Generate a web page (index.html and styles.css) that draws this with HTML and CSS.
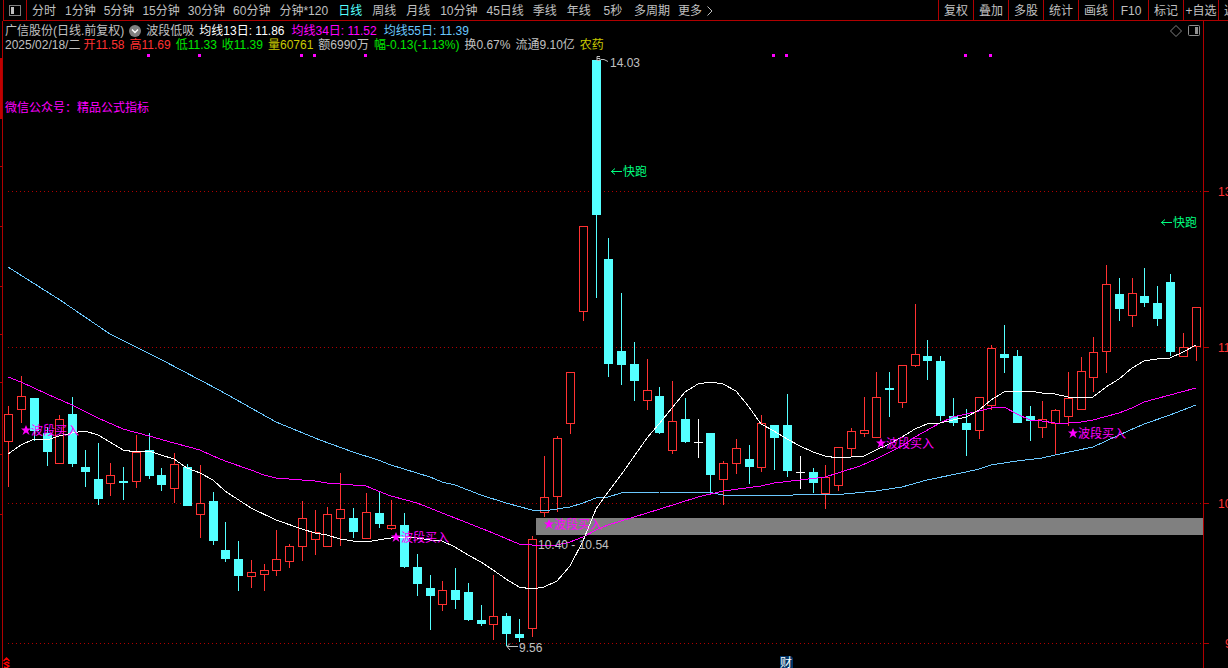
FILE: index.html
```html
<!DOCTYPE html>
<html lang="zh-CN">
<head>
<meta charset="utf-8">
<title>广信股份 日线</title>
<link rel="stylesheet" href="styles.css">
</head>
<body>
<header class="toolbar">
  <button class="layout-toggle" type="button" aria-label="侧栏">
    <svg width="12" height="11" viewBox="0 0 12 11" shape-rendering="crispEdges"><rect x=".5" y=".5" width="11" height="10" rx="1" fill="none" stroke="#808080"/><rect x="2" y="2" width="3" height="7" fill="#c0c0c0"/></svg>
  </button>
  <nav class="periods">
    <button type="button">分时</button>
    <button type="button">1分钟</button>
    <button type="button">5分钟</button>
    <button type="button">15分钟</button>
    <button type="button">30分钟</button>
    <button type="button">60分钟</button>
    <button type="button" class="wide">分钟*120</button>
    <button type="button" class="active">日线</button>
    <button type="button">周线</button>
    <button type="button">月线</button>
    <button type="button" class="wide">10分钟</button>
    <button type="button">45日线</button>
    <button type="button">季线</button>
    <button type="button">年线</button>
    <button type="button">5秒</button>
    <button type="button">多周期</button>
    <button type="button" class="more">更多<svg width="6" height="10" viewBox="0 0 6 10"><path d="M.5.5 5 5 .5 9.500" fill="none" stroke="#c0c0c0"/></svg></button>
  </nav>
  <div class="tools">
    <button type="button">复权</button>
    <button type="button">叠加</button>
    <button type="button">多股</button>
    <button type="button">统计</button>
    <button type="button">画线</button>
    <button type="button">F10</button>
    <button type="button">标记</button>
    <button type="button">+自选</button>
    <button type="button">返回</button>
  </div>
</header>
<main>
  <section class="info">
    <div class="row row-title">
      <span>广信股份(日线.前复权)</span>
      <button class="icon" type="button" aria-label="选择指标"><svg width="12" height="12" viewBox="0 0 12 12"><circle cx="6" cy="6" r="6" fill="#808080"/><path d="M3 4.500 6 7.500 9 4.500" fill="none" stroke="#fff" stroke-width="1.400"/></svg></button>
      <span>波段低吸</span>
      <span class="average white">均线13日: 11.86</span>
      <span class="average magenta">均线34日: 11.52</span>
      <span class="average blue">均线55日: 11.39</span>
      <span class="corner">
        <button class="icon" type="button" aria-label="标记"><svg width="12" height="12" viewBox="0 0 12 12"><path d="M6 .5 11.500 6 6 11.500 .5 6Z" fill="none" stroke="#808080"/></svg></button>
        <button class="icon" type="button" aria-label="右侧面板"><svg width="12" height="12" viewBox="0 0 12 12"><rect x=".5" y=".5" width="11" height="10" rx="1" fill="none" stroke="#909090"/><rect x="7" y="2" width="3" height="7" fill="#909090"/></svg></button>
      </span>
    </div>
    <div class="row row-quote">
      <span class="date">2025/02/18/二</span>
      <span class="red">开11.58</span>
      <span class="red">高11.69</span>
      <span class="green">低11.33</span>
      <span class="green">收11.39</span>
      <span class="yellow">量60761</span>
      <span>额6990万</span>
      <span class="green">幅-0.13(-1.13%)</span>
      <span>换0.67%</span>
      <span>流通9.10亿</span>
      <span class="yellow">农药</span>
    </div>
  </section>
  <svg class="chart" viewBox="0 52 1228 616" role="img" aria-label="日K线图">
    <defs>
      <g id="buy">
        <path class="star" d="M0-5 1.500-1.500H5L2 1 3.500 5 0 2.500-3.500 5-2 1-5-1.500H-1.500Z"/>
        <text class="t magenta" x="5" y="5">波段买入</text>
      </g>
      <g id="run">
        <path class="run-arrow" d="M0 .5H11M4-2.500 .5.5 4 3.500"/>
        <text class="t run" x="12" y="5">快跑</text>
      </g>
    </defs>
    <g class="grid">
      <path d="M8 191.500H1203M8 347.500H1203M8 503.500H1203M8 643.500H1203"/>
    </g>
    <path class="axis" d="M2.500 52V668M1203.500 52V668M1204 191.500h5M1204 347.500h5M1204 503.500h5M1204 643.500h5M0 166.500h2M0 226.500h2M0 286.500h2M0 334.500h2M0 382.500h2M0 454.500h2M0 514.500h2"/>
    <path class="thumb" d="M0 58h2v61H0z"/>
    <path class="band" d="M536 518H1203V535H536z"/>
    <path class="dots" d="M147 54h3v3h-3zM198 54h3v3h-3zM300 54h3v3h-3zM313 54h3v3h-3zM364 54h3v3h-3zM772 54h3v3h-3zM785 54h3v3h-3zM964 54h3v3h-3zM989 54h3v3h-3z"/>
    <g id="candles" class="candles"></g>
    <polyline class="ma ma55" points="8,267 60,300 110,334 162,360 219,390 276,422 320,440 353,452 378,460 391,465 430,477 442,482 455,485 481,495 506,503 532,510 544,511 557,509 570,507 583,503 596,498 608,497 621,493 634,492 659,492 698,493 708,492 723,495 793,495 800,494 844,494 876,491 902,487 927,480 966,472 979,469 991,465 1017,461 1042,458 1055,455 1093,447 1119,435 1144,424 1170,415 1196,405"/>
    <polyline class="ma ma34" points="8,377 21,382 34,388 47,394 72,405 98,418 123,429 149,436 174,443 200,450 213,456 225,461 251,470 264,475 276,478 315,481 327,483 366,486 378,491 391,496 417,503 455,518 493,533 519,544 544,546 557,545 570,542 583,537 596,530 608,525 660,509 698,497 723,491 761,486 774,483 800,480 825,477 838,473 860,466 876,459 902,446 915,437 940,423 953,417 966,414 979,411 991,408 1004,407 1017,414 1030,420 1042,421 1055,423 1068,423 1081,422 1093,420 1119,413 1132,408 1144,402 1170,395 1196,388"/>
    <polyline class="ma ma13" points="8,454 21,445 34,439 47,440 59,436 72,433 85,431 98,435 110,442 123,450 136,452 149,451 161,455 174,459 187,468 200,473 213,480 225,491 251,508 276,520 302,529 315,533 327,535 340,539 353,541 366,542 378,540 391,538 404,537 417,538 430,540 442,541 455,547 468,555 481,562 493,570 506,579 519,587 532,589 544,587 557,581 570,566 583,541 596,509 608,492 621,475 647,438 659,424 672,408 685,392 698,384 710,382 723,384 736,391 749,407 761,424 774,431 787,439 800,446 813,452 825,456 838,458 851,457 864,456 876,450 889,444 902,437 915,429 927,424 940,423 953,420 966,417 979,410 991,400 1004,392 1030,391 1042,393 1055,394 1068,397 1081,398 1093,397 1106,387 1119,379 1132,368 1144,361 1157,359 1170,358 1183,352 1196,345"/>
    <text class="t magenta" x="5" y="112">微信公众号：精品公式指标</text>
    <use href="#buy" x="26" y="430"/>
    <use href="#buy" x="396" y="537"/>
    <use href="#buy" x="549" y="524"/>
    <use href="#buy" x="881" y="443"/>
    <use href="#buy" x="1073" y="433"/>
    <use href="#run" x="611" y="171"/>
    <use href="#run" x="1161" y="222"/>
    <path class="note" d="M600 56.500h-3v4h3v-2h-3M601 59.500h3l4 2M507 646.500H518M510 643.500 507 646.500 510 650"/>
    <text class="t" x="610" y="67">14.03</text>
    <text class="t" x="519" y="652">9.56</text>
    <text class="t" x="538" y="549">10.40 - 10.54</text>
    <text class="t red" x="1218" y="196">13</text>
    <text class="t red" x="1218" y="352">11</text>
    <text class="t red" x="1218" y="508">10</text>
    <text class="t red" x="1225" y="648">9</text>
    <path class="badge" d="M780 656h11l2 2v10h-13z"/>
    <text class="t white" x="780" y="667">财</text>
    <path class="marker" d="M3.500 661 6.500 658 9.500 661M9.500 663.500 7 662 4.500 663.500 9 666 6.500 668 4 667"/>
  </svg>
</main>
<script src="chart.js"></script>
</body>
</html>
```
FILE: styles.css
```css
* { box-sizing: border-box; }

body {
  margin: 0;
  min-height: 100vh;
  overflow: hidden;
  background: #000;
  color: #c0c0c0;
  font: 12px/14px "Liberation Sans", "Noto Sans CJK SC", sans-serif;
}

button {
  margin: 0;
  padding: 0;
  border: 0;
  background: none;
  color: inherit;
  font: inherit;
  white-space: nowrap;
}

.toolbar {
  display: flex;
  height: 21px;
  margin-left: 3px;
  border-left: 1px solid #b00000;
  border-bottom: 1px solid #b00000;
}

.layout-toggle {
  display: grid;
  place-items: center;
  flex: none;
  width: 23px;
  border-right: 1px solid #b00000;
}

.periods {
  display: flex;
  flex: 1;
  min-width: 0;
  overflow: hidden;
}

.periods button {
  flex: none;
  min-width: 34px;
  padding: 1px 4px 0;
}

.periods .wide { padding: 1px 5px 0; }
.periods .active { color: #54ffff; }

.periods .more {
  display: flex;
  align-items: center;
  gap: 5px;
}

.tools {
  display: flex;
  flex: 0 0 290px;
  overflow: hidden;
}

.tools button {
  flex: 0 0 35px;
  padding-top: 1px;
  border-left: 1px solid #b00000;
}

.info {
  height: 31px;
  margin: 0 24px 0 2px;
  padding: 3px 3px 0 2px;
  border: solid #b00000;
  border-width: 0 1px;
}

.row {
  display: flex;
  align-items: center;
  height: 14px;
  gap: 5px;
  white-space: nowrap;
}

.average { margin-right: 2px; }
.date { margin-right: -2px; }

.icon { display: block; }
.icon svg { display: block; }

.corner {
  display: flex;
  gap: 6px;
  margin-left: auto;
}

.white { color: #fff; fill: #fff; }
.magenta { color: #f0f; fill: #f0f; }
.blue { color: #6ac8ff; }
.red { color: #ff3232; fill: #ff3232; }
.green { color: #00e600; }
.yellow { color: #c8c800; }

.chart {
  display: block;
  width: 100%;
  height: auto;
}

.t { font-size: 12px; white-space: pre; }
.t:not([class*=" "]) { fill: #c0c0c0; }
.run { fill: #00ff80; }

.grid path {
  stroke: #b00000;
  stroke-dasharray: 1 3;
  shape-rendering: crispEdges;
}

.axis { fill: none; stroke: #b00000; shape-rendering: crispEdges; }
.thumb { fill: #c00000; }
.band { fill: #808080; }
.dots, .star { fill: #f0f; }
.badge { fill: #003366; }
.marker { fill: none; stroke: #f00; stroke-width: 1.5; }
.note { fill: none; stroke: #c0c0c0; }
.run-arrow { fill: none; stroke: #00ff80; }

.candles { shape-rendering: crispEdges; }
.up { fill: none; stroke: #ff3232; }
.down { fill: #54ffff; }
.flat { fill: #fff; }

.ma { fill: none; shape-rendering: crispEdges; }
.ma13 { stroke: #fff; }
.ma34 { stroke: #f0f; }
.ma55 { stroke: #6ac8ff; }
```
FILE: chart.js
```js
// Each candle: centre x, kind (u = up, d = down, f = flat), high, body top, body bottom, low
const candles = `
8u406,414,442,487 21u376,396,410,423 34d398,398,431,441 47d427,433,452,466 59u415,419,464,464
72d397,414,464,467 85d450,467,472,487 98d443,479,499,505 110u463,475,484,496 123d467,481,483,500
136u435,452,482,488 149d433,450,476,479 161d468,475,485,491 174u453,464,489,503 187d464,467,506,506
200u465,503,515,538 213d492,501,541,545 225d522,550,559,562 238d541,559,576,591 251u560,572,577,588
264u564,570,575,591 276u530,559,571,576 289u544,546,562,568 302u501,518,547,561 315u510,532,540,555
327u507,514,547,547 340u473,509,519,546 353d508,518,532,538 366u493,512,539,539 379d492,513,524,528
391u500,525,529,530 404d513,525,567,568 417d554,567,584,596 430d575,588,596,630 442u581,590,605,611
455d568,590,600,609 468d583,592,620,621 481d605,620,624,626 493u575,616,625,640 506d613,616,634,646
519d619,634,638,642 532u536,539,629,637 544u456,497,513,517 557u436,438,497,512 570u372,372,424,434
583u226,226,312,321 596d60,60,215,298 608d238,259,364,377 621d293,351,365,385 634d342,364,381,401
647u359,390,401,410 659d387,396,433,434 672u381,421,451,454 685d398,419,442,443 698f419,442,443,458
710d433,433,475,492 723u461,463,480,505 736u439,448,464,474 749d445,459,467,484 761u415,423,468,472
774d425,425,438,470 787d394,425,471,477 800f456,472,473,489 813d468,472,483,493 825u465,477,494,509
838u447,447,486,491 851u428,431,449,457 864u397,430,434,437 876u372,397,438,438 889d372,388,390,417
902u365,365,403,408 915u304,354,366,367 927d340,356,361,380 940d356,361,416,421 953d398,416,423,426
966d409,423,430,456 979u397,397,431,439 991u345,348,406,410 1004d325,354,358,373 1017d350,356,423,423
1030d406,416,421,441 1042u401,419,428,438 1055u409,410,424,455 1068u372,398,417,426 1081u357,371,410,410
1093u337,352,378,392 1106u265,284,352,373 1119d278,294,309,321 1132u278,293,316,327 1144d268,296,303,307
1157d286,303,319,326 1170d274,282,352,356 1183u333,347,357,357 1196u307,307,347,361`;

const paths = { u: "", d: "", f: "" };
for (const item of candles.trim().split(/\s+/)) {
  const [, xs, kind, rest] = item.match(/^(\d+)([udf])(.+)$/);
  const x = Number(xs);
  const [high, top, bottom, low] = rest.split(",").map(Number);
  if (kind === "u") {
    paths.u += `M${x - 3.5} ${top + 0.5}h8V${bottom - 0.5}h-8ZM${x + 0.5} ${high}V${top}M${x + 0.5} ${bottom}V${low}`;
  } else {
    paths[kind] += `M${x - 4} ${top}h9V${bottom}h-9ZM${x} ${high}h1V${top}h-1ZM${x} ${bottom}h1V${low}h-1Z`;
  }
}
document.getElementById("candles").innerHTML =
  `<path class="up" d="${paths.u}"/><path class="down" d="${paths.d}"/><path class="flat" d="${paths.f}"/>`;
```
